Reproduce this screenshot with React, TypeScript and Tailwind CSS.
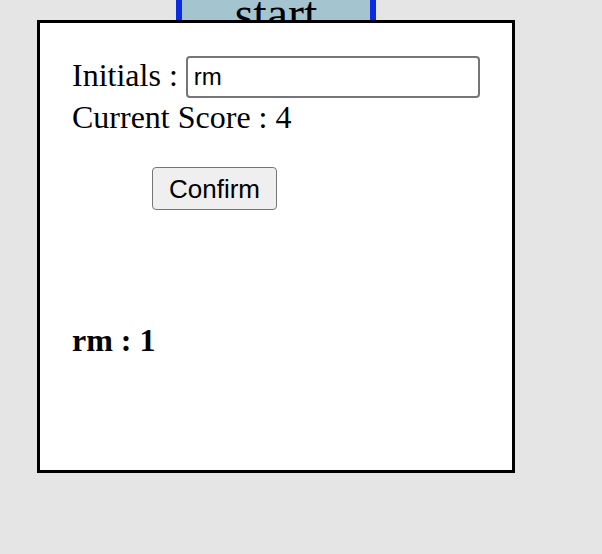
import { useState } from 'react'

export default function App() {
  const [initials, setInitials] = useState('rm')

  return (
    <div className="relative min-h-screen bg-[#e5e5e5] overflow-hidden" style={{ fontFamily: '"Liberation Serif", "Times New Roman", serif' }}>
      <div className="pl-[176px] -mt-[31px]">
        <button className="w-[200px] h-[90px] border-[6px] border-[#0a2be0] bg-[#a4c4d0] text-[48px] leading-[48px] text-black font-['Liberation_Serif',serif]">
          start
        </button>
      </div>

      {/* score dialog */}
      <div className="absolute left-[37px] top-[20px] w-[478px] h-[453px] border-[3px] border-black bg-white pl-[32px] pt-[33px]">
        <div className="flex items-center h-[42px] text-[32px] leading-[32px] text-black">
          <span className="whitespace-pre mb-[4px]">Initials : </span>
          <input
            value={initials}
            onChange={(e) => setInitials(e.target.value)}
            className="w-[294px] h-[42px] border-2 border-[#767676] rounded-[4px] bg-white pl-[6px] text-[24px] text-black outline-none font-['Liberation_Sans',Arial,sans-serif]"
          />
        </div>
        <p className="mt-[3px] text-[32px] leading-[32px] text-black">Current Score : 4</p>

        <button className="ml-[80px] mt-[34px] w-[125px] h-[43px] border border-[#767676] rounded-[4px] bg-[#efefef] text-[26px] leading-none text-black font-['Liberation_Sans',Arial,sans-serif]">
          Confirm
        </button>

        <p className="mt-[114px] text-[32px] leading-[32px] font-bold text-black">rm : 1</p>
      </div>
    </div>
  )
}
